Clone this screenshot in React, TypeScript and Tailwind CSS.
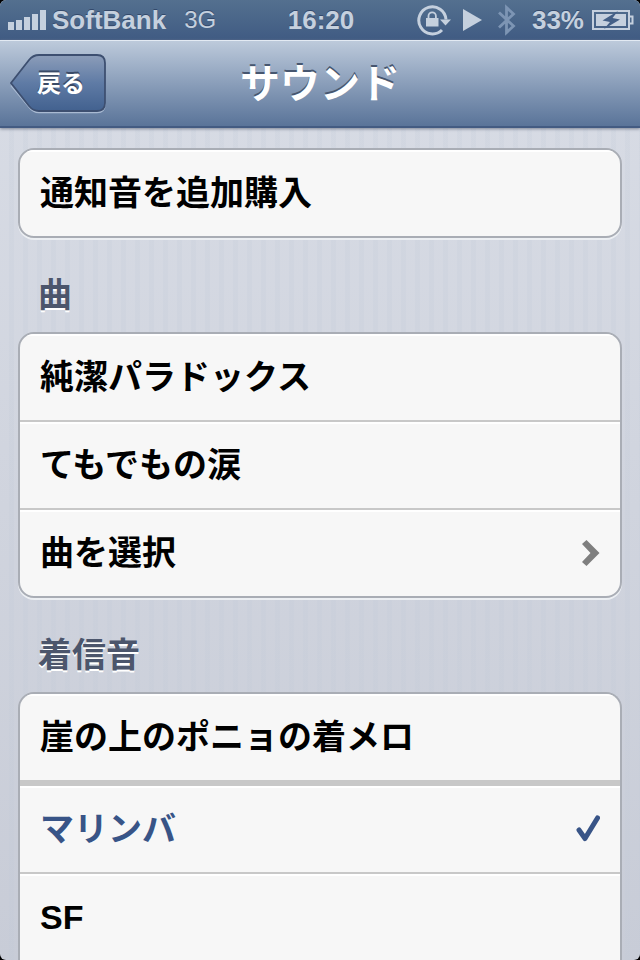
import { useState } from "react";

const NotchArrow = () => (
    <svg className="h-7 w-[18px] shrink-0" viewBox="0 0 18 28" fill="#7f7f7f">
        <path d="M0 5 4.5 1 17.5 14 4.5 27 0 23 8.5 14z" />
    </svg>
);

const CheckMark = () => (
    <svg className="h-7 w-[26px] shrink-0" viewBox="0 0 26 28" fill="none">
        <path d="M5 15 11 23.5 23.5 3" stroke="#385487" strokeWidth="5" strokeLinecap="round" strokeLinejoin="round" />
    </svg>
);

const SignalBars = () => (
    <svg className="h-5 w-[38px]" viewBox="0 0 38 20" fill="#c5d0de">
        <path d="M0 12h6v8H0zM8 10h6v10H8zM16 7h6v13h-6zM24 4h6v16h-6zM32 0h6v20h-6z" />
    </svg>
);

const RotationLock = () => (
    <svg className="h-8 w-[34px]" viewBox="0 0 34 32" fill="none">
        <path d="M25 26A13.6 13.6 0 1 1 29 15.5" stroke="#c5d0de" strokeWidth="3" />
        <path d="M23 15.5h11L28.5 21.5z" fill="#c5d0de" />
        <path d="M9 14h12.5v8.5H9z" fill="#c5d0de" />
        <path d="M11.5 14.5v-2.5a3.7 3.7 0 0 1 7.4 0v2.5" stroke="#c5d0de" strokeWidth="1.8" />
    </svg>
);

const PlayIcon = () => (
    <svg className="h-[22px] w-[19px]" viewBox="0 0 19 22" fill="#c5d0de">
        <path d="M0 0 19 11 0 22z" />
    </svg>
);

const BluetoothIcon = () => (
    <svg className="h-8 w-[18px]" viewBox="0 0 18 32" fill="none">
        <path d="M1 8.5 15.5 22 8.5 28.5v-25L15.5 10 1 23.5" stroke="#7d95b4" strokeWidth="2.8" />
    </svg>
);

const BatteryIcon = () => (
    <svg className="h-5 w-[42px]" viewBox="0 0 42 20" fill="none">
        <path d="M1 1h36v18H1z" stroke="#c5d0de" strokeWidth="2" />
        <path d="M38 6.5h2.5v7H38" stroke="#c5d0de" strokeWidth="2" />
        <path d="M4 4h30v12H4z" fill="#c5d0de" />
        <path d="M26 1 10.5 10.5 18 12 12 19 28 9.5 20.5 8z" fill="#435f87" />
    </svg>
);

const StatusBar = () => (
    <div className="grid h-10 grid-cols-[1fr_auto_1fr] items-center bg-linear-to-b from-[#54708f] to-[#405b83] pr-1.5 pl-2 text-[26px] leading-10 font-bold text-[#c5d0de] text-shadow-[0_-1px_0_#33496b]">
        <div className="flex items-center gap-1.5">
            <SignalBars />
            <span>SoftBank</span>
            <span className="ml-3 text-2xl leading-10 font-normal">3G</span>
        </div>
        <span>16:20</span>
        <div className="flex items-center justify-end">
            <RotationLock />
            <span className="ml-3"><PlayIcon /></span>
            <span className="ml-4"><BluetoothIcon /></span>
            <span className="ml-4">33%</span>
            <span className="ml-2"><BatteryIcon /></span>
        </div>
    </div>
);

const BackButton = () => (
    <button className="relative flex h-[60px] w-24 items-center justify-center pl-1.5 text-2xl font-bold text-white text-shadow-[0_-2px_0_#3a4a66]">
        <svg className="absolute inset-0 h-full w-full" viewBox="0 0 96 60" fill="none">
            <defs>
                <linearGradient id="back" x1="0" y1="0" x2="0" y2="1">
                    <stop offset="0" stopColor="#8c9db9" />
                    <stop offset="0.5" stopColor="#5f7ba5" />
                    <stop offset="1" stopColor="#42618f" />
                </linearGradient>
            </defs>
            <path d="M1 31.5 19 53Q23 58.5 29 58.5H87Q95 58.5 95 50.5V11Q95 3 87 3" stroke="#a9bad2" strokeWidth="1.5" />
            <path d="M1 29 19 6Q23 1 29 1H87Q95 1 95 9V49Q95 57 87 57H29Q23 57 19 52Z" fill="url(#back)" stroke="#3d4f70" strokeWidth="1.8" />
        </svg>
        <span className="relative">戻る</span>
    </button>
);

interface RowProps {
    label: string;
    selected?: boolean;
    disclosure?: boolean;
    divider?: string;
    onClick?: () => void;
}

const Row = ({ label, selected, disclosure, divider = "border-t-2", onClick }: RowProps) => (
    <li className={`border-[#c8c8c8] ${divider}`}>
        <button
            className={`flex h-[86px] w-full items-center justify-between px-5 text-left text-[34px] font-bold shadow-[inset_0_2px_0_#ffffff] ${
                selected ? "text-[#385487]" : "text-black"
            }`}
            onClick={onClick}
        >
            <span>{label}</span>
            {disclosure && <NotchArrow />}
            {selected && <CheckMark />}
        </button>
    </li>
);

const SectionTitle = ({ children }: { children: string }) => (
    <h2 className="flex h-[94px] items-center pt-5 pl-5 text-[34px] font-bold text-[#4c566c] text-shadow-[0_2px_0_#ffffff]">
        {children}
    </h2>
);

const cardStyle = "overflow-hidden border-2 border-[#a9adb5] bg-[#f7f7f7]";

const App = () => {
    const [tone, setTone] = useState("マリンバ");

    return (
        <div className="min-h-screen bg-black font-['Liberation_Sans','Noto_Sans_CJK_JP',sans-serif]" lang="ja">
            <div className="flex min-h-screen flex-col overflow-hidden rounded-md bg-linear-to-b from-[#d9dde6] to-[#c8ccd7]">
                <StatusBar />
                <header className="z-10 grid h-[88px] grid-cols-[1fr_auto_1fr] items-center border-t border-b-2 border-t-[#e3eaf3] border-b-[#435b82] bg-linear-to-b from-[#bdcadb] to-[#5a7499] px-2.5 shadow-[0_1px_3px_#7d8595]">
                    <BackButton />
                    <h1 className="text-[40px] leading-none font-bold text-white text-shadow-[0_-2px_0_#46566f]">サウンド</h1>
                </header>
                <main className="flex-1 bg-[repeating-linear-gradient(90deg,transparent_0_9px,#c0c9d733_9px_14px)] px-[18px] pt-5">
                    <ul className={`${cardStyle} rounded-2xl shadow-[0_2px_0_#eceff3]`}>
                        <Row label="通知音を追加購入" divider="border-t-0" />
                    </ul>

                    <SectionTitle>曲</SectionTitle>
                    <ul className={`${cardStyle} rounded-2xl shadow-[0_2px_0_#eceff3]`}>
                        <Row label="純潔パラドックス" divider="border-t-0" selected={tone === "純潔パラドックス"} onClick={() => setTone("純潔パラドックス")} />
                        <Row label="てもでもの涙" selected={tone === "てもでもの涙"} onClick={() => setTone("てもでもの涙")} />
                        <Row label="曲を選択" disclosure />
                    </ul>

                    <SectionTitle>着信音</SectionTitle>
                    <ul className={`${cardStyle} rounded-t-2xl border-b-0`}>
                        <Row label="崖の上のポニョの着メロ" divider="border-t-0" selected={tone === "崖の上のポニョの着メロ"} onClick={() => setTone("崖の上のポニョの着メロ")} />
                        <Row label="マリンバ" divider="border-t-6" selected={tone === "マリンバ"} onClick={() => setTone("マリンバ")} />
                        <Row label="SF" selected={tone === "SF"} onClick={() => setTone("SF")} />
                    </ul>
                </main>
            </div>
        </div>
    );
};

export default App;
